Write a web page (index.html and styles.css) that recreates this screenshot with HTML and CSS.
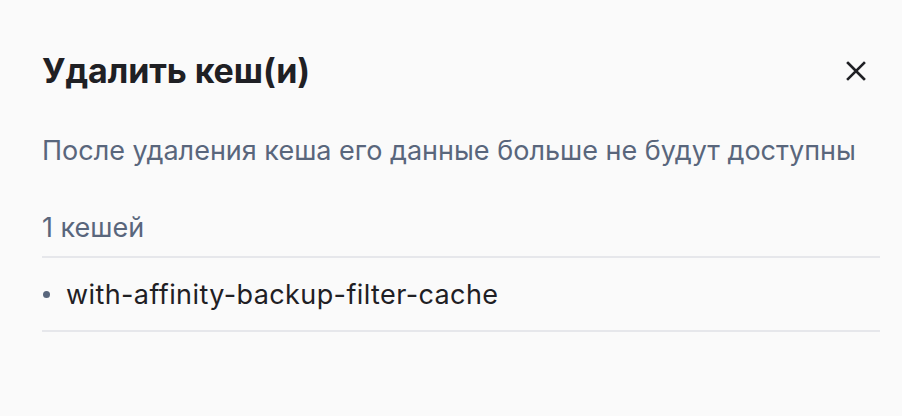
FILE: index.html
```html
<!DOCTYPE html>
<html lang="ru">
<head>
<meta charset="utf-8">
<link rel="stylesheet" href="styles.css">
</head>
<body>
<div class="modal">
  <div class="header">
    <h1 class="title">Удалить кеш(и)</h1>
    <button class="close" aria-label="Закрыть">
      <svg width="20" height="20" viewBox="0 0 20 20"><path d="M2 2 L18 18 M18 2 L2 18" stroke="#1f2024" stroke-width="2.6" stroke-linecap="square" fill="none"/></svg>
    </button>
  </div>
  <p class="desc">После удаления кеша его данные больше не будут доступны</p>
  <div class="count">1 кешей</div>
  <ul class="list">
    <li class="item"><span class="dot"></span>with-affinity-backup-filter-cache</li>
  </ul>
</div>
</body>
</html>
```
FILE: styles.css
```css
html, body {
  margin: 0;
  background: #fafafa;
}
body {
  font-family: Inter, "Noto Sans", sans-serif;
  color: #1f2024;
}
.modal {
  padding: 51px 22px 0 42px;
}
.header {
  display: flex;
  align-items: center;
  justify-content: space-between;
  height: 40px;
}
.title {
  margin: 0;
  font-size: 34px;
  line-height: 40px;
  font-weight: 700;
  letter-spacing: -0.1px;
}
.close {
  border: 0;
  background: none;
  padding: 0;
  margin-right: 14px;
  width: 20px;
  height: 20px;
  display: flex;
}
.desc {
  margin: 46px 0 0;
  font-size: 27px;
  line-height: 27px;
  color: #59667c;
}
.count {
  margin-top: 50px;
  font-size: 27px;
  line-height: 27px;
  color: #59667c;
  padding-bottom: 15px;
  border-bottom: 2px solid #e6e7eb;
}
.list {
  list-style: none;
  margin: 0;
  padding: 0;
}
.item {
  display: flex;
  align-items: center;
  height: 74px;
  padding-top: 0;
  box-sizing: border-box;
  font-size: 27px;
  line-height: 27px;
  letter-spacing: 0.4px;
  border-bottom: 2px solid #e6e7eb;
}
.dot {
  width: 7px;
  height: 7px;
  border-radius: 50%;
  background: #59667c;
  margin: 0 16px 0 1px;
}
```
